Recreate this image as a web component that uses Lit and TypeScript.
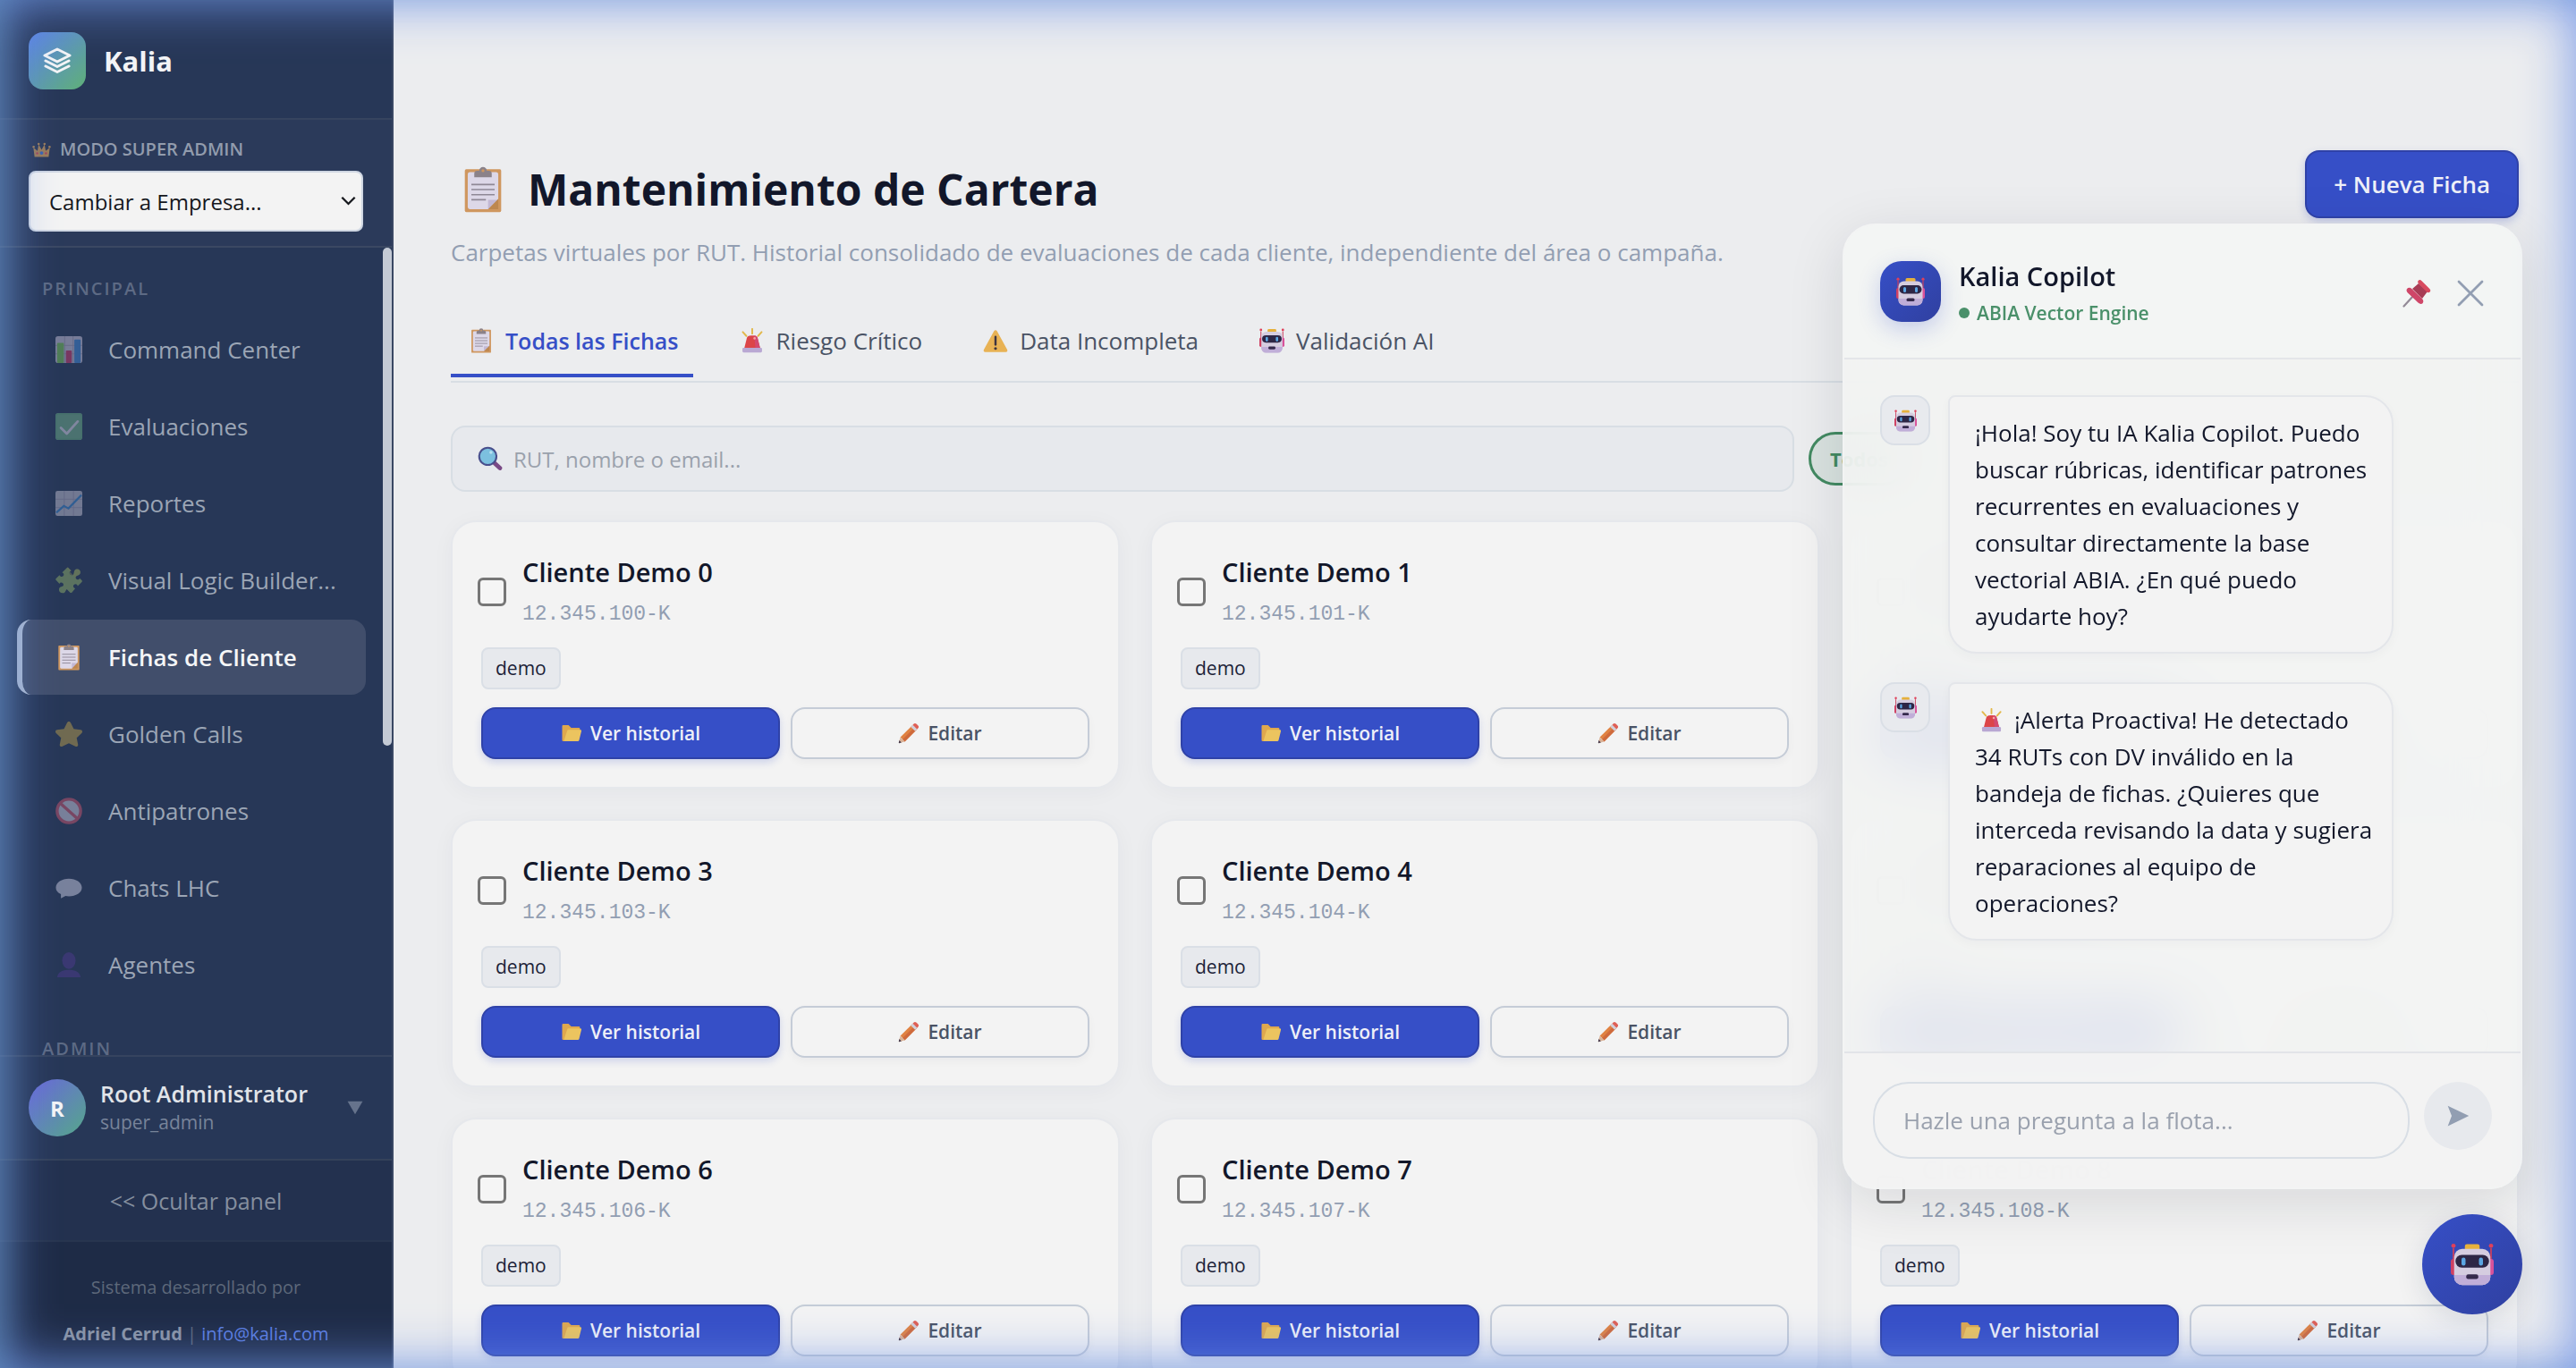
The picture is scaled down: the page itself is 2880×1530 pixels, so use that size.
import { LitElement, html, css, svg, nothing } from "lit";
import { customElement, property } from "lit/decorators.js";
import { classMap } from "lit/directives/class-map.js";

const robot = svg`
  <path d="M2 4v16M30 4v16" stroke="#c9405f" stroke-width="1.200"/>
  <circle cx="2" cy="2.200" r="1.600" fill="#e0405a"/><circle cx="30" cy="2.200" r="1.600" fill="#e0405a"/>
  <rect x="0" y="12" width="4" height="12" rx="2" fill="#cf4163"/><rect x="28" y="12" width="4" height="12" rx="2" fill="#d8529a"/>
  <rect x="10.500" y="1" width="11" height="5" rx="1.500" fill="#e6b13c"/>
  <rect x="2.500" y="4.500" width="27" height="27" rx="6" fill="#d5cde0"/>
  <path d="M2.500 24h27v1.500a6 6 0 0 1-6 6h-15a6 6 0 0 1-6-6z" fill="#c0aed8"/>
  <rect x="3.500" y="9" width="25" height="9.500" rx="4.700" fill="#2d2645"/>
  <rect x="8" y="11" width="3" height="6" rx="1.500" fill="#5ba6e2"/><rect x="21" y="11" width="3" height="6" rx="1.500" fill="#5ba6e2"/>
  <rect x="11.500" y="23.500" width="9" height="3.500" rx="1.500" fill="#352a4c"/>`;

const clipboard = svg`
  <rect x="3.500" y="2" width="25" height="29.500" rx="1" fill="#cf975f"/>
  <path d="M5.500 5.500A1.500 1.500 0 0 1 7 4h18a1.500 1.500 0 0 1 1.500 1.500V22.500L20 29.500H7A1.500 1.500 0 0 1 5.500 28z" fill="#ddd8e8"/>
  <path d="M19.500 29.500V23h7z" fill="#c2b8d4"/><path d="M19.500 29.500l7-7v7z" fill="#bd874f"/>
  <path d="M8 12.500h16M8 16h16M8 19.500h16M8 23h10" stroke="#8f8896" stroke-width="1"/>
  <path d="M10 7.500V5a2 2 0 0 1 2-2h1.400a2.600 2.600 0 0 1 5.200 0H20a2 2 0 0 1 2 2v2.500z" fill="#8b8289"/>
  <circle cx="16" cy="3" r="1" fill="#cf975f"/>`;

const ICONS: Record<string, unknown> = {
  robot,
  clipboard,
  crown: svg`
    <path d="M4 28L2 12l7 6 2-11 5 9 5-9 2 11 7-6-2 16z" fill="#c9985a"/>
    <circle cx="2.500" cy="11" r="2" fill="#c9985a"/><circle cx="29.500" cy="11" r="2" fill="#c9985a"/><circle cx="11" cy="6" r="2" fill="#c9985a"/><circle cx="21" cy="6" r="2" fill="#c9985a"/>
    <circle cx="16" cy="21.500" r="3" fill="#3f74d8"/><circle cx="8.500" cy="22" r="1.800" fill="#d2445f"/><circle cx="23.500" cy="22" r="1.800" fill="#d2445f"/>`,
  bars: svg`
    <rect width="32" height="32" rx="3" fill="#c6c0d8"/>
    <path d="M0 11h32M0 21h32M11 0v32M21 0v32" stroke="#a59fbb" stroke-width="1"/>
    <rect x="2" y="8" width="8" height="24" rx="1" fill="#79c257"/><rect x="12.500" y="17" width="7" height="15" rx="1" fill="#c93a6c"/><rect x="22.500" y="4" width="7.500" height="28" rx="1" fill="#3f86d6"/>`,
  check: svg`
    <rect width="32" height="32" rx="3" fill="#6fae8a"/><rect x="1" y="1" width="30" height="30" rx="2.500" fill="none" stroke="#5fa67c"/>
    <path d="M6.500 17.500l7 7L26.500 10" fill="none" stroke="#d8d4e6" stroke-width="3" stroke-linecap="round" stroke-linejoin="round"/>`,
  trend: svg`
    <rect y="1" width="32" height="30" rx="2.500" fill="#bdbace"/>
    <path d="M0 11h32M0 21h32M10.500 1v30M21.500 1v30" stroke="#a09cb6" stroke-width="1"/>
    <path d="M1 27l9-8 5.500 3L31 6" fill="none" stroke="#3a86cf" stroke-width="2.400"/>`,
  puzzle: svg`
    <path d="M13.500 1.200c.6-.6 1.400-.6 2 0l3.300 3.400c-2.400.7-2.600 3-1.200 4.400 1.500 1.500 3.900 1 4.400-1.300.2-2.700 1.400-4.900 3.800-4.900 2.300 0 4 1.800 3.900 3.900 0 2-1.600 3.300-3.700 3.700-2.300.6-2.500 2.900-1.200 4.100 1.200 1.200 3.300.9 4.100-1l2.500 2.600c.6.600.6 1.400 0 2L26.500 23c-.4-2.400-3-3.100-4.500-1.600-1.400 1.400-.9 3.600 1.500 4.400l-4 4.800c-.6.600-1.400.6-2 0l-4-4c-1.500 1.200-1.500 4.400-4.300 4.700-2.900.3-5.100-1.600-5-4.300.1-2.500 2-3.200 4-3.800 1.800-.7 1.800-2.600.6-3.800-1.300-1.200-3.300-.9-4 .8L.7 15.800c-.6-.6-.6-1.400 0-2l4.100-4c.9 2.100 3 2.500 4.400 1.200 1.500-1.500.8-3.800-1.200-4.400z" fill="#8fae6a"/>
    <path d="M13.500 1.200c.6-.6 1.400-.6 2 0l3.300 3.400c-2.400.7-2.600 3-1.200 4.400 1.500 1.500 3.900 1 4.400-1.300.2-2.700 1.400-4.900 3.800-4.900 2.300 0 4 1.800 3.900 3.900 0 2-1.600 3.300-3.700 3.700-2.300.6-2.500 2.900-1.200 4.100z" fill="#a8ac5a" opacity=".6"/>`,
  star: svg`
    <path d="M16 1c1 0 1.700.6 2.100 1.500l3.700 7.300 8.200 1.200c2 .3 2.700 2.300 1.200 3.800l-5.900 5.700 1.600 8.100c.3 1.900-1.500 3-3.200 2.100L16 27l-7.700 3.700c-1.700.9-3.500-.2-3.200-2.100l1.600-8.100L.8 14.800C-.7 13.300 0 11.300 2 11l8.200-1.200 3.700-7.300C14.300 1.600 15 1 16 1z" fill="#b99e4c"/>`,
  banned: svg`
    <circle cx="16" cy="16" r="14" fill="#c9c9dc"/>
    <circle cx="16" cy="16" r="14" fill="none" stroke="#c9566f" stroke-width="3.600"/>
    <path d="M6.500 7.500l19 17" stroke="#c9566f" stroke-width="3.600"/>`,
  bubble: svg`
    <path d="M16 5c8.500 0 15.500 4.500 15.500 10.800S24.500 26 16 26c-1.500 0-2.800 0-4-.3L6.500 28.500v-5c-3.700-1.600-6-4-6-7.700C.5 9.500 7.500 5 16 5z" fill="#c9cbe0"/>`,
  person: svg`
    <ellipse cx="16" cy="11" rx="8" ry="10" fill="#4d3a8e"/><path d="M2 31c1-6.500 6-9 14-9s13 2.500 14 9z" fill="#4d3a8e"/>`,
  siren: svg`
    <path d="M16 1v6M4 5l4.500 5M28 5l-4.500 5" stroke="#e2b84a" stroke-width="2.200" stroke-linecap="round"/>
    <path d="M6 25l3-12c.8-2.600 2.500-3.500 7-3.500s6.200.9 7 3.500l3 12z" fill="#dc4548"/>
    <path d="M18.500 9.500c2.700.3 4 1.300 4.500 3.500l3 12h-6z" fill="#d34a70"/>
    <circle cx="19" cy="13" r="1.500" fill="#f6a5a5"/>
    <rect x="3.500" y="25" width="25" height="6" rx="1.500" fill="#b9a8d3"/>`,
  warning: svg`
    <path d="M16 2.500c.8 0 1.400.4 1.900 1.200l13 23.700c.8 1.600 0 3.100-1.800 3.100H2.900c-1.800 0-2.600-1.500-1.800-3.100l13-23.700c.5-.8 1.100-1.200 1.900-1.200z" fill="#e8b254"/>
    <path d="M16 11v10" stroke="#3d3440" stroke-width="2.800" stroke-linecap="round"/><circle cx="16" cy="26" r="1.800" fill="#3d3440"/>`,
  lens: svg`
    <path d="M22 22l6.500 6" stroke="#7a4a86" stroke-width="5.500" stroke-linecap="round"/>
    <circle cx="13" cy="13" r="11" fill="#7cc0df" stroke="#484f8d" stroke-width="2.400"/><circle cx="17" cy="8" r="2" fill="#b8e1f0"/>`,
  folder: svg`
    <path d="M2 5.500A1.500 1.500 0 0 1 3.500 4h8l4 4H27a1.500 1.500 0 0 1 1.500 1.500V16L22 28H3.500A1.500 1.500 0 0 1 2 26.500z" fill="#dfa84e"/>
    <path d="M9.500 12.500c.3-1 .9-1.500 1.800-1.500H29c1.300 0 2 .8 1.700 2l-3.400 13.700c-.3.900-.9 1.300-1.800 1.300H4.500z" fill="#ecc45f"/>`,
  pencil: svg`
    <path d="M3.500 22L22 3.500l6.500 6.500L10 28.500z" fill="#e08242"/><path d="M6.700 25.200L25.200 6.700l3.300 3.300L10 28.500z" fill="#cf6a3c"/>
    <path d="M19 6.500L22 3.500l6.500 6.500-3 3z" fill="#d2cfda"/>
    <path d="M22 3.500l1.600-1.600c1.200-1.200 2.700-.8 4 .5l2 2c1.300 1.300 1.700 2.800.5 4L28.500 10z" fill="#df5f55"/>
    <path d="M3.500 22l6.500 6.500-7.500 2.300c-1 .3-1.600-.3-1.300-1.300z" fill="#d9b49a"/><path d="M1.900 26.800l3.300 3.300-2.700.7c-1 .3-1.600-.3-1.300-1.300z" fill="#453a4c"/>`,
  pin: svg`
    <path d="M1.500 30.500L12 19" stroke="#938a97" stroke-width="2.200" stroke-linecap="round"/>
    <path d="M11 11l7-6 10 9-6 8z" fill="#a83c55"/>
    <path d="M17.800 1.700c1-1.200 2.400-1 3.500.2l9 9.200c1.200 1.200 1.300 2.500.3 3.500-1.100 1-2.500.9-3.700-.3l-8.700-8.900c-1.200-1.200-1.400-2.600-.4-3.700z" fill="#d84a5f"/>
    <path d="M5.300 10.800c1.300-1.400 3.500-1.300 5.300.4l11.300 10.900c1.700 1.700 1.900 3.900.6 5.200-1.200 1.200-3.300 1-5-.7L5.900 15.600c-1.600-1.600-1.800-3.500-.6-4.800z" fill="#cf4668"/>`,
  close: svg`<path d="M3 3l26 26M29 3L3 29" stroke="#929eb2" stroke-width="2.800" stroke-linecap="round"/>`,
  send: svg`<path d="M3 3l27 13L3 29l5-13z" fill="#929eb2"/>`,
  caret: svg`<path d="M1 3h30L16 29z" fill="#66738c"/>`,
  chevron: svg`<path d="M2.500 9L16 22.500 29.500 9" fill="none" stroke="#15171c" stroke-width="4.400"/>`,
  layers: svg`
    <path d="M16 3L30 10 16 17 2 10z M3 16l13 6.500L29 16 M3 22l13 6.500L29 22" fill="none" stroke="#f3f4f6" stroke-width="3" stroke-linejoin="round" stroke-linecap="round"/>`,
};

const icon = (name: string, cls = "ico") =>
  html`<svg class=${cls} viewBox="0 0 32 32" aria-hidden="true">${ICONS[name]}</svg>`;

const base = css`
  * { box-sizing: border-box; }
  button, input, select { font-family: inherit; margin: 0; }
  button { cursor: pointer; }
  h1, h2, h3, p { margin: 0; }
  svg { display: block; flex: none; }
`;

@customElement("kalia-sidebar")
class KaliaSidebar extends LitElement {
  static styles = [base, css`
    :host { display: flex; flex-direction: column; min-height: 0; background: #273757; border-right: 2px solid #394763; color: #9ba5b5; }
    .brand { display: flex; align-items: center; gap: 20px; padding: 36px 32px 32px; border-bottom: 2px solid #36445f; }
    .logo { display: grid; place-items: center; width: 64px; height: 64px; border-radius: 16px; background: linear-gradient(135deg, #5b82e6, #5fb078); }
    .logo-ico { width: 32px; height: 32px; }
    .name { font-size: 31px; line-height: 48px; font-weight: 700; color: #f3f4f6; }
    .mode { padding: 18px 32px 16px; background: #2b3a5a; border-bottom: 2px solid #3b4862; }
    .mode-label { display: flex; align-items: center; gap: 10px; padding-left: 4px; font-size: 20px; line-height: 30px; font-weight: 600; color: #929cad; }
    .crown { width: 21px; height: 21px; opacity: .7; }
    .picker { position: relative; margin-top: 9px; }
    .picker select { display: block; width: 100%; height: 68px; padding: 0 21px; appearance: none; border: 2px solid #cfd6e2; border-radius: 8px; background: #f3f3f3; font-size: 24px; color: #15171c; }
    .chevron { position: absolute; right: 8px; top: 25px; width: 17px; height: 17px; pointer-events: none; }
    .scroll { position: relative; flex: 1; min-height: 0; overflow: hidden; padding: 0 29px 0 19px; }
    .thumb { position: absolute; top: 0; right: 0; width: 10px; height: 61.7%; border-radius: 5px; background: #c4cad5; }
    .group { display: flex; flex-direction: column; gap: 2px; margin-bottom: 6px; }
    .label { padding: 32px 28px 10px; font-size: 20px; line-height: 28px; font-weight: 600; letter-spacing: 2px; color: #5d6a84; }
    .item { display: flex; align-items: center; gap: 22px; height: 84px; padding: 0 24px 0 30px; border-left: 6px solid transparent; border-radius: 16px; font-size: 26px; color: #9ba5b5; text-decoration: none; white-space: nowrap; }
    .item.active { background: #414e6b; border-left-color: #afbbd0; color: #f5f6f7; font-weight: 600; }
    .slot { display: grid; place-items: center; width: 44px; }
    .ico { width: 30px; height: 30px; opacity: .5; }
    .active .ico { opacity: 1; }
    .user { display: flex; align-items: center; gap: 16px; padding: 25px 32px; border-top: 2px solid #36445f; }
    .avatar { display: grid; place-items: center; width: 64px; height: 64px; border-radius: 50%; background: linear-gradient(135deg, #6a66dc, #55a88a); font-size: 24px; font-weight: 700; color: #f3f4f6; }
    .who { flex: 1; }
    .who-name { font-size: 25px; line-height: 32px; font-weight: 600; color: #e1e4e9; }
    .who-role { font-size: 21px; line-height: 32px; color: #78849a; }
    .caret { width: 18px; height: 18px; }
    .hide { height: 93px; border: 0; border-top: 2px solid #34425a; border-bottom: 2px solid #28354f; background: #23314f; font-size: 25px; color: #858f9f; }
    .credit { padding: 25px 0 12px; background: #1e2b46; text-align: center; font-size: 20px; line-height: 52px; color: #5d687a; }
    .credit b { font-weight: 700; color: #8b94a3; }
    .credit a { color: #5a7de0; text-decoration: none; }
  `];

  private items = [
    ["bars", "Command Center"], ["check", "Evaluaciones"], ["trend", "Reportes"],
    ["puzzle", "Visual Logic Builder..."], ["clipboard", "Fichas de Cliente"], ["star", "Golden Calls"],
    ["banned", "Antipatrones"], ["bubble", "Chats LHC"], ["person", "Agentes"],
  ];

  render() {
    return html`
      <div class="brand"><span class="logo">${icon("layers", "logo-ico")}</span><span class="name">Kalia</span></div>
      <div class="mode">
        <label class="mode-label" for="company">${icon("crown", "crown")}MODO SUPER ADMIN</label>
        <div class="picker"><select id="company"><option>Cambiar a Empresa...</option></select>${icon("chevron", "chevron")}</div>
      </div>
      <nav class="scroll">
        <div class="group">
          <div class="label">PRINCIPAL</div>
          ${this.items.map(([ico, text]) => html`
            <a href="#" class=${classMap({ item: true, active: ico === "clipboard" })}><span class="slot">${icon(ico)}</span>${text}</a>`)}
        </div>
        <div class="group"><div class="label">ADMIN</div></div>
        <div class="thumb"></div>
      </nav>
      <div class="user">
        <span class="avatar">R</span>
        <div class="who"><div class="who-name">Root Administrator</div><div class="who-role">super_admin</div></div>
        ${icon("caret", "caret")}
      </div>
      <button class="hide">&lt;&lt; Ocultar panel</button>
      <footer class="credit">Sistema desarrollado por<br><b>Adriel Cerrud</b> | <a href="mailto:info@kalia.com">info@kalia.com</a></footer>
    `;
  }
}

@customElement("client-card")
class ClientCard extends LitElement {
  @property({ type: Number }) index = 0;

  static styles = [base, css`
    :host { display: flex; flex-direction: column; align-items: stretch; padding: 32px 32px 31px; border: 2px solid #e6e8ec; border-radius: 28px; background: #f3f3f3; box-shadow: 0 4px 24px rgba(30, 40, 80, .04); }
    .head { display: flex; align-items: center; gap: 18px; margin-left: -4px; }
    .pick { appearance: none; width: 32px; height: 32px; border: 3px solid #767676; border-radius: 6px; background: #f5f5f5; }
    .title { font-size: 29px; line-height: 48px; font-weight: 600; color: #12172a; }
    .rut { margin-top: 2px; font-family: "Liberation Mono", monospace; font-size: 23px; line-height: 42px; color: #929eb2; }
    .tag { align-self: flex-start; margin-top: 16px; padding: 0 14px; border: 2px solid #dadfe6; border-radius: 8px; background: #e7e9ed; font-size: 21px; line-height: 43px; color: #1c2238; }
    .actions { display: grid; grid-template-columns: 1fr 1fr; gap: 12px; margin-top: 20px; }
    .btn { display: flex; align-items: center; justify-content: center; gap: 9px; height: 58px; border: 2px solid #c5ccd7; border-radius: 16px; background: #f3f3f3; box-shadow: 0 4px 10px rgba(20, 30, 60, .04); font-size: 21px; font-weight: 600; color: #4a5365; }
    .btn.primary { border-color: #2f42a8; background: #364fc7; box-shadow: 0 4px 8px rgba(54, 79, 199, .2); color: #eef0f8; }
    .ico { width: 24px; height: 24px; }
  `];

  render() {
    const id = `pick-${this.index}`;
    return html`
      <div class="head">
        <input class="pick" id=${id} type="checkbox">
        <label for=${id}><div class="title">Cliente Demo ${this.index}</div><div class="rut">12.345.${100 + this.index}-K</div></label>
      </div>
      <span class="tag">demo</span>
      <div class="actions">
        <button class="btn primary">${icon("folder")}Ver historial</button>
        <button class="btn">${icon("pencil")}Editar</button>
      </div>
    `;
  }
}

@customElement("copilot-panel")
class CopilotPanel extends LitElement {
  static styles = [base, css`
    :host { display: flex; flex-direction: column; border: 2px solid rgba(243, 244, 244, .8); border-radius: 36px; overflow: hidden; background: rgba(243, 244, 243, .88); backdrop-filter: blur(34px); box-shadow: 0 16px 64px rgba(20, 25, 45, .12); color: #12172a; }
    .top { display: flex; align-items: center; gap: 20px; padding: 40px; height: 150px; border-bottom: 2px solid #e4e6e9; background: rgba(243, 245, 244, .8); }
    .face { display: grid; place-items: center; width: 68px; height: 68px; border-radius: 24px; background: linear-gradient(135deg, #364fc7, #3040a0); box-shadow: 0 8px 24px rgba(54, 79, 199, .25); }
    .face-ico { width: 32px; height: 32px; }
    .names { flex: 1; padding-top: 6px; }
    .title { font-size: 29px; line-height: 42px; font-weight: 600; }
    .status { display: flex; align-items: center; gap: 8px; font-size: 21px; line-height: 40px; font-weight: 600; color: #4a906a; }
    .dot { width: 12px; height: 12px; border-radius: 50%; background: #4a906a; }
    .tools { display: flex; gap: 28px; padding-top: 4px; }
    .tool { display: grid; place-items: center; padding: 0; border: 0; background: none; width: 32px; height: 32px; }
    .tool-ico { width: 32px; height: 32px; }
    .log { flex: 1; display: flex; flex-direction: column; gap: 32px; padding: 40px; min-height: 0; overflow: hidden; }
    .msg { display: flex; align-items: flex-start; gap: 20px; }
    .mini { display: grid; place-items: center; width: 56px; height: 56px; border: 2px solid #dadfe6; border-radius: 16px; background: #e8eaee; }
    .mini-ico { width: 25px; height: 25px; }
    .bubble { width: 498px; padding: 20px 12px 19px 28px; border: 2px solid #e4e6ea; border-radius: 8px 32px 32px 32px; background: #f3f3f3; box-shadow: 0 4px 12px rgba(20, 30, 60, .03); font-size: 26px; line-height: 41px; }
    .inline { display: inline-block; width: 27px; height: 27px; margin: 0 12px 0 5px; vertical-align: -4px; }
    .ask { display: flex; align-items: flex-start; gap: 16px; padding: 32px; border-top: 2px solid #e2e4e8; background: rgba(243, 243, 243, .9); }
    .ask input { flex: 1; min-width: 0; height: 86px; padding: 0 32px; border: 2px solid #d8dee5; border-radius: 40px; outline: 0; background: #f3f3f3; font-size: 26px; }
    .ask input::placeholder { color: #9aa1ae; opacity: 1; }
    .send { display: grid; place-items: center; width: 76px; height: 76px; padding: 0; border: 0; border-radius: 50%; background: #e7e9ed; }
    .send-ico { width: 32px; height: 28px; }
  `];

  private messages = [
    { alert: false, text: "¡Hola! Soy tu IA Kalia Copilot. Puedo buscar rúbricas, identificar patrones recurrentes en evaluaciones y consultar directamente la base vectorial ABIA. ¿En qué puedo ayudarte hoy?" },
    { alert: true, text: "¡Alerta Proactiva! He detectado 34 RUTs con DV inválido en la bandeja de fichas. ¿Quieres que interceda revisando la data y sugiera reparaciones al equipo de operaciones?" },
  ];

  render() {
    return html`
      <header class="top">
        <span class="face">${icon("robot", "face-ico")}</span>
        <div class="names"><h2 class="title">Kalia Copilot</h2><div class="status"><i class="dot"></i>ABIA Vector Engine</div></div>
        <div class="tools">
          <button class="tool" aria-label="Fijar">${icon("pin", "tool-ico")}</button>
          <button class="tool" aria-label="Cerrar">${icon("close", "tool-ico")}</button>
        </div>
      </header>
      <div class="log">
        ${this.messages.map((m) => html`
          <div class="msg"><span class="mini">${icon("robot", "mini-ico")}</span><p class="bubble">${m.alert ? icon("siren", "inline") : nothing}${m.text}</p></div>`)}
      </div>
      <form class="ask">
        <input type="text" aria-label="Pregunta" placeholder="Hazle una pregunta a la flota...">
        <button class="send" type="button" aria-label="Enviar">${icon("send", "send-ico")}</button>
      </form>
    `;
  }
}

@customElement("app-root")
class AppRoot extends LitElement {
  static styles = [base, css`
    :host { display: grid; grid-template-columns: 440px minmax(0, 1fr); height: 100vh; overflow: hidden; background: #ecedef; font-family: "Open Sans", "Noto Sans", sans-serif; color: #12172a; }
    main { min-width: 0; min-height: 0; overflow: hidden; padding: 168px 64px 0; }
    .head { display: flex; align-items: flex-start; justify-content: space-between; }
    .title { display: flex; align-items: center; gap: 24px; padding-left: 10px; font-size: 48px; line-height: 88px; font-weight: 700; }
    .title-ico { width: 52px; height: 52px; }
    .sub { font-size: 26px; line-height: 52px; color: #929eb2; }
    .new { height: 76px; padding: 0 30px; border: 2px solid #2f42a8; border-radius: 16px; background: #364fc7; box-shadow: 0 4px 10px rgba(54, 79, 199, .25); font-size: 26px; font-weight: 600; color: #eef0f8; }
    .tabs { display: flex; gap: 32px; margin-top: 36px; padding-bottom: 4px; border-bottom: 2px solid #d8dee4; }
    .tab { display: flex; align-items: center; gap: 13px; height: 78px; padding: 0 16px 0 20px; border: 0; border-bottom: 4px solid transparent; background: none; font-size: 26px; color: #4a5365; }
    .tab.active { border-bottom-color: #364fc7; font-size: 25px; font-weight: 600; color: #364fc7; }
    .tab-ico { width: 28px; height: 28px; }
    .filters { display: grid; grid-template-columns: minmax(0, 1fr) 794px; align-items: center; gap: 16px; margin-top: 48px; }
    .search { display: flex; align-items: center; gap: 12px; height: 74px; padding: 0 28px; border: 2px solid #d8dee4; border-radius: 16px; background: #e7e9ed; }
    .search-ico { width: 28px; height: 28px; }
    .search input { flex: 1; min-width: 0; padding: 0; border: 0; outline: 0; background: none; font-size: 24px; }
    .search input::placeholder { color: #9aa1ac; opacity: 1; }
    .pill { justify-self: start; height: 60px; padding: 0 21px; border: 3px solid #438a62; border-radius: 30px; background: #d9e2df; font-size: 22px; font-weight: 700; color: #438a62; }
    .cards { display: grid; grid-template-columns: repeat(3, minmax(0, 1fr)); gap: 34px; margin-top: 32px; }
    copilot-panel { position: fixed; right: 60px; bottom: 200px; width: 760px; height: 1080px; }
    .fab { position: fixed; right: 60px; bottom: 60px; display: grid; place-items: center; width: 112px; height: 112px; padding: 0; border: 0; border-radius: 50%; background: linear-gradient(135deg, #364fc7, #3040a0); box-shadow: 0 8px 32px rgba(20, 30, 70, .12); }
    .fab-ico { width: 48px; height: 48px; }
    .glow { position: fixed; inset: 0; pointer-events: none; box-shadow: inset 20px 0 40px -20px rgba(90, 150, 160, .4), inset 0 0 60px rgba(112, 146, 232, .95); }
  `];

  private tabs = [["clipboard", "Todas las Fichas"], ["siren", "Riesgo Crítico"], ["warning", "Data Incompleta"], ["robot", "Validación AI"]];

  render() {
    return html`
      <kalia-sidebar></kalia-sidebar>
      <main>
        <header class="head">
          <div>
            <h1 class="title">${icon("clipboard", "title-ico")}Mantenimiento de Cartera</h1>
            <p class="sub">Carpetas virtuales por RUT. Historial consolidado de evaluaciones de cada cliente, independiente del área o campaña.</p>
          </div>
          <button class="new">+ Nueva Ficha</button>
        </header>
        <div class="tabs">
          ${this.tabs.map(([ico, text], i) => html`<button class=${classMap({ tab: true, active: i === 0 })}>${icon(ico, "tab-ico")}${text}</button>`)}
        </div>
        <div class="filters">
          <div class="search">${icon("lens", "search-ico")}<input type="text" aria-label="Buscar" placeholder="RUT, nombre o email..."></div>
          <button class="pill">Todos</button>
        </div>
        <div class="cards">${[0, 1, 2, 3, 4, 5, 6, 7, 8].map((n) => html`<client-card .index=${n}></client-card>`)}</div>
      </main>
      <copilot-panel></copilot-panel>
      <button class="fab" aria-label="Abrir Kalia Copilot">${icon("robot", "fab-ico")}</button>
      <div class="glow"></div>
    `;
  }
}
